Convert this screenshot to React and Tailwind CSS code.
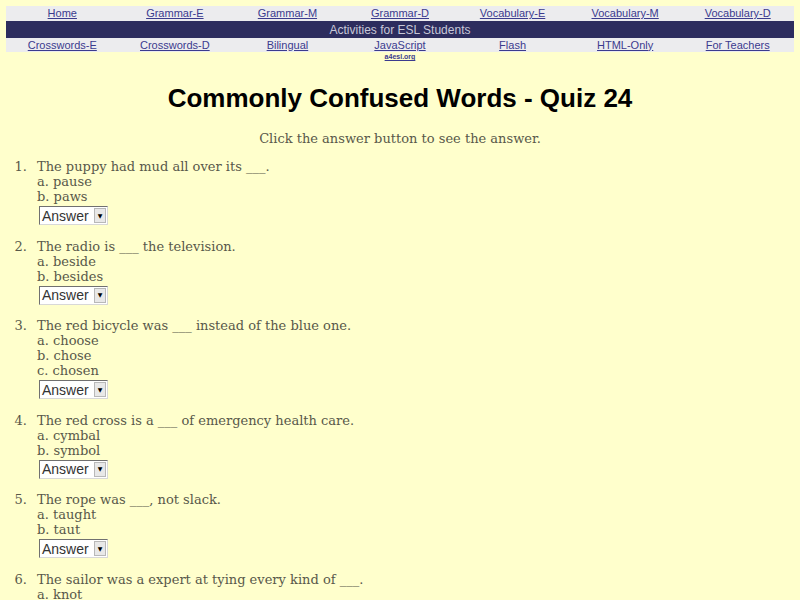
const topLinks = ['Home', 'Grammar-E', 'Grammar-M', 'Grammar-D', 'Vocabulary-E', 'Vocabulary-M', 'Vocabulary-D'];
const bottomLinks = ['Crosswords-E', 'Crosswords-D', 'Bilingual', 'JavaScript', 'Flash', 'HTML-Only', 'For Teachers'];

const questions = [
  { q: 'The puppy had mud all over its ___.', opts: ['a. pause', 'b. paws'] },
  { q: 'The radio is ___ the television.', opts: ['a. beside', 'b. besides'] },
  { q: 'The red bicycle was ___ instead of the blue one.', opts: ['a. choose', 'b. chose', 'c. chosen'] },
  { q: 'The red cross is a ___ of emergency health care.', opts: ['a. cymbal', 'b. symbol'] },
  { q: 'The rope was ___, not slack.', opts: ['a. taught', 'b. taut'] },
  { q: 'The sailor was a expert at tying every kind of ___.', opts: ['a. knot', 'b. not'] },
];

function AnswerSelect() {
  return (
    <div className="flex items-center h-[19px] w-[69px] ml-[2px] bg-white border border-t-[#707070] border-l-[#707070] border-b-[#d8d8d8] border-r-[#d8d8d8] mt-[2px]">
      <span className="flex-1 pl-[2px] text-[14px] leading-none text-[#333] font-['Liberation_Sans',Arial,sans-serif]">Answer</span>
      <span className="w-[12px] h-[15px] mr-[1px] bg-[#e8e8e8] border border-[#b8b8b8] flex items-center justify-center text-[6px] text-black leading-none">▼</span>
    </div>
  );
}

export default function App() {
  return (
    <div className="bg-[#ffffcc] pt-[6px] px-[6px] overflow-hidden h-[600px]">
      <div className="font-['Liberation_Sans',Arial,sans-serif]">
        <div className="grid grid-cols-7 bg-[#ececee] h-[15px] items-center">
          {topLinks.map((l) => (
            <a key={l} href="#" className="text-center text-[11px] leading-none text-[#3b3b8e] underline">{l}</a>
          ))}
        </div>
        <div className="bg-[#2d2d5e] h-[17px] flex items-center justify-center text-[12px] text-[#c8c8d8]">
          Activities for ESL Students
        </div>
        <div className="grid grid-cols-7 bg-[#ececee] h-[14px] items-center">
          {bottomLinks.map((l) => (
            <a key={l} href="#" className="text-center text-[11px] leading-none text-[#3b3b8e] underline">{l}</a>
          ))}
        </div>
        <div className="grid grid-cols-7">
          <div className="col-start-4 text-center text-[7px] leading-[10px] font-bold text-[#3b3b8e] underline">a4esl.org</div>
        </div>
      </div>

      <h1 className="text-center text-[26px] font-bold text-black mt-[20px] leading-[32px] font-['Liberation_Sans',Arial,sans-serif]">
        Commonly Confused Words - Quiz 24
      </h1>

      <div className="font-['DejaVu_Serif',serif] text-[13px] leading-[15px] text-[#58584a]">
        <p className="text-center mt-[17px]">Click the answer button to see the answer.</p>
        <ol className="mt-[13px] pl-[25px] list-decimal">
          {questions.map((item, i) => (
            <li key={i} className="mb-[13.5px] pl-[6px]">
              <div>{item.q}</div>
              {item.opts.map((o) => (
                <div key={o}>{o}</div>
              ))}
              <AnswerSelect />
            </li>
          ))}
        </ol>
      </div>
    </div>
  );
}
